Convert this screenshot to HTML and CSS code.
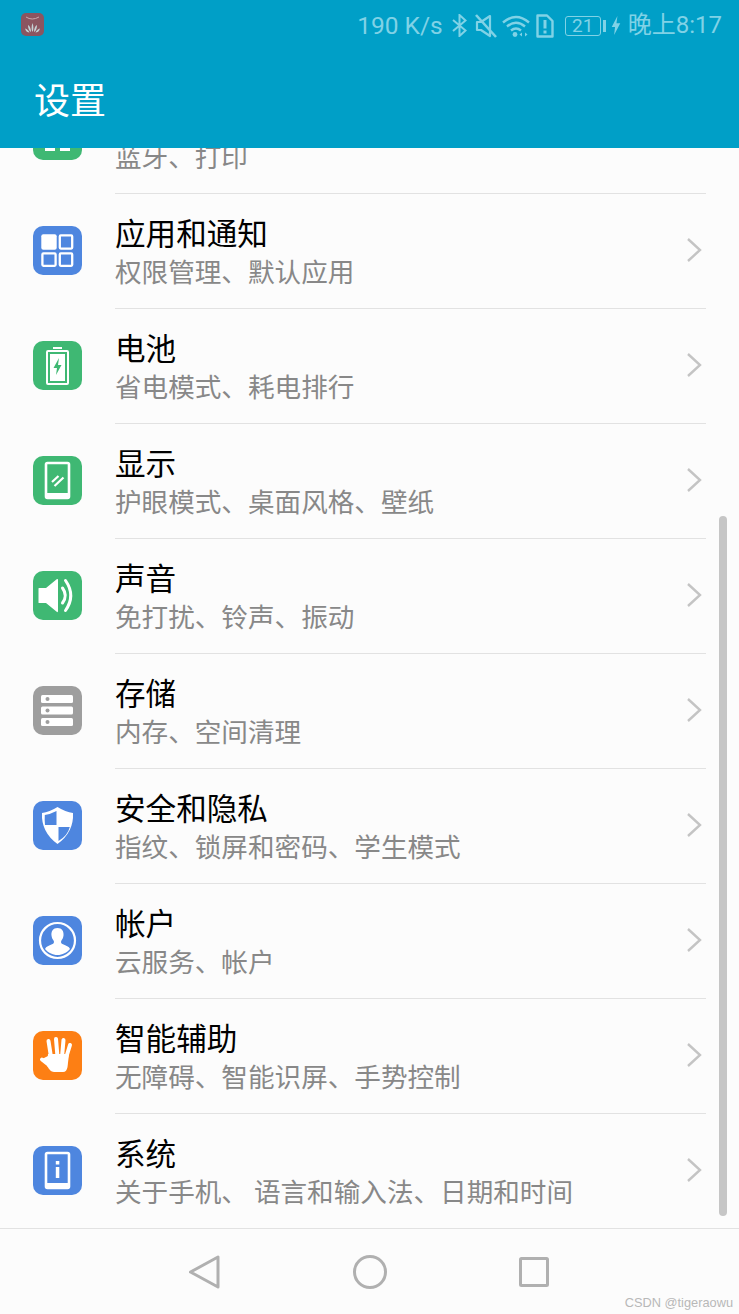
FILE: index.html
```html
<!DOCTYPE html>
<html lang="zh-CN">
<head>
    <meta charset="UTF-8">
    <meta name="viewport" content="width=device-width, initial-scale=1.0">
    <title>设置</title>
    <link rel="stylesheet" href="styles.css">
</head>
<body>
    <header class="appbar">
        <div class="status">
            <svg class="notify" viewBox="0 0 23 23"><rect width="23" height="23" rx="5" fill="#8b5560"/><path d="M5 4q6 4 13 0" fill="none" stroke="#c9a9ae" stroke-width="1"/><path d="M11.500 19c-1.200-2-1.200-6 0-9 1.200 3 1.200 7 0 9zM10 19c-2-1-3-4-3-7 2 1 3 4 3 7zM13 19c0-3 1-6 3-7 0 3-1 6-3 7zM8.500 19.500c-2 0-3.500-1-4.500-4 2 .5 3.500 2 4.500 4zM14.500 19.500c1-2 2.500-3.500 4.500-4-1 3-2.500 4-4.500 4z" fill="#c5d3d6"/></svg>
            <div class="status-right">
                <span class="speed">190 K/s</span>
                <svg class="si si-bt" viewBox="0 0 15 23"><path d="M1 6 13.500 16.500 7.500 22V1L13.500 6.500 1 17" fill="none" stroke="currentColor" stroke-width="2"/></svg>
                <svg class="si si-mute" viewBox="0 0 22 24"><path d="M2 8v8h4l9 6V2L6 8z" fill="none" stroke="currentColor" stroke-width="2.200" stroke-linejoin="round"/><path d="M1 1l20 22" fill="none" stroke="currentColor" stroke-width="2.600"/></svg>
                <svg class="si si-wifi" viewBox="0 0 28 24"><path d="M1 8.500q13-11 26 0M5 12.500q9-7.500 18 0M9 16.500q5-4 10 0" fill="none" stroke="currentColor" stroke-width="2.400"/><circle cx="13" cy="20.500" r="2.400" fill="currentColor"/><path d="M20 18.500v4l-2.500-2zM23 18.500v4l2.500-2z" fill="currentColor"/></svg>
                <svg class="si si-sim" viewBox="0 0 18 24"><path d="M1.500 1.500h9.500l5.500 5.500v15.500H1.500z" fill="none" stroke="currentColor" stroke-width="2.400" stroke-linejoin="round"/><path d="M9 6v8.500M9 16.500v3" stroke="currentColor" stroke-width="3" fill="none"/></svg>
                <span class="battery"><span class="battery-num">21</span></span>
                <span class="battery-tip"></span>
                <svg class="si si-bolt" viewBox="0 0 10 20"><path d="M6.500 0 .5 11.500h3.500L3 20l6.500-12.500H5.500z" fill="currentColor"/></svg>
                <span class="clock">晚上8:17</span>
            </div>
        </div>
        <h1 class="page-title">设置</h1>
    </header>

    <main class="list">
        <div class="row row-first">
            <span class="tile green"><svg viewBox="0 0 49 49"><rect x="12" y="10" width="10" height="30" fill="#fff"/><rect x="27" y="10" width="10" height="30" fill="#fff"/></svg></span>
            <div class="row-body">
                <div class="row-text"><div class="row-title"></div><div class="row-sub">蓝牙、打印</div></div>
            </div>
        </div>

        <div class="row">
            <span class="tile blue"><svg viewBox="0 0 49 49"><rect x="8.300" y="8.300" width="15.400" height="15.400" rx="2" fill="#fff"/><rect x="26.800" y="9.400" width="12.400" height="13.200" rx="1" fill="none" stroke="#fff" stroke-width="2.300"/><rect x="9.400" y="27.400" width="13.200" height="12.400" rx="1" fill="none" stroke="#fff" stroke-width="2.300"/><rect x="26.800" y="27.400" width="12.400" height="12.400" rx="1" fill="none" stroke="#fff" stroke-width="2.300"/></svg></span>
            <div class="row-body">
                <div class="row-text"><div class="row-title">应用和通知</div><div class="row-sub">权限管理、默认应用</div></div>
                <svg class="chev" viewBox="0 0 16 26"><path d="M2 2l12 11L2 24" fill="none" stroke="#c4c4c4" stroke-width="2.400"/></svg>
            </div>
        </div>

        <div class="row">
            <span class="tile green"><svg viewBox="0 0 49 49"><rect x="20" y="6" width="9" height="2" fill="#fff"/><rect x="14" y="10" width="21" height="33" rx="1" fill="none" stroke="#fff" stroke-width="2"/><rect x="17" y="13" width="15" height="27" fill="#fff"/><path d="M26 17l-5.500 10h3.500l-1 7 5.500-10h-3.500z" fill="#3fb873"/></svg></span>
            <div class="row-body">
                <div class="row-text"><div class="row-title">电池</div><div class="row-sub">省电模式、耗电排行</div></div>
                <svg class="chev" viewBox="0 0 16 26"><path d="M2 2l12 11L2 24" fill="none" stroke="#c4c4c4" stroke-width="2.400"/></svg>
            </div>
        </div>

        <div class="row">
            <span class="tile green"><svg viewBox="0 0 49 49"><rect x="13" y="7" width="23" height="35" rx="1.500" fill="none" stroke="#fff" stroke-width="2.600"/><rect x="13" y="37" width="23" height="5" rx="1" fill="#fff"/><path d="M19 26l6.500-6M21.500 30l9-8.500" fill="none" stroke="#fff" stroke-width="2.200"/></svg></span>
            <div class="row-body">
                <div class="row-text"><div class="row-title">显示</div><div class="row-sub">护眼模式、桌面风格、壁纸</div></div>
                <svg class="chev" viewBox="0 0 16 26"><path d="M2 2l12 11L2 24" fill="none" stroke="#c4c4c4" stroke-width="2.400"/></svg>
            </div>
        </div>

        <div class="row">
            <span class="tile green"><svg viewBox="0 0 49 49"><path d="M6 17h7l11-9q1-.5 1 1v31q0 1.500-1 1l-11-9H6q-.5 0-.5-.5v-14q0-.5.5-.5z" fill="#fff"/><path d="M29.500 17q5.500 7.500 0 15M32.500 9.500q10.500 15 0 30" fill="none" stroke="#fff" stroke-width="3" stroke-linecap="round"/></svg></span>
            <div class="row-body">
                <div class="row-text"><div class="row-title">声音</div><div class="row-sub">免打扰、铃声、振动</div></div>
                <svg class="chev" viewBox="0 0 16 26"><path d="M2 2l12 11L2 24" fill="none" stroke="#c4c4c4" stroke-width="2.400"/></svg>
            </div>
        </div>

        <div class="row">
            <span class="tile gray"><svg viewBox="0 0 49 49"><rect x="8" y="9" width="32" height="8" rx="1.500" fill="#fff"/><rect x="8" y="20.500" width="32" height="8" rx="1.500" fill="#fff"/><rect x="8" y="32" width="32" height="8" rx="1.500" fill="#fff"/><circle cx="14.500" cy="13" r="2" fill="#9e9e9e"/><circle cx="14.500" cy="24.500" r="2" fill="#9e9e9e"/><circle cx="14.500" cy="36" r="2" fill="#9e9e9e"/></svg></span>
            <div class="row-body">
                <div class="row-text"><div class="row-title">存储</div><div class="row-sub">内存、空间清理</div></div>
                <svg class="chev" viewBox="0 0 16 26"><path d="M2 2l12 11L2 24" fill="none" stroke="#c4c4c4" stroke-width="2.400"/></svg>
            </div>
        </div>

        <div class="row">
            <span class="tile blue"><svg viewBox="0 0 49 49"><path d="M24.500 6q8 5 15.500 6 1 19-15.500 31Q8 31 9 12q7.500-1 15.500-6z" fill="#fff"/><path d="M23.500 10v14H12q-.5-5-.2-10 6-1 11.700-4zM25.500 26h11.300q-2 8.500-11.300 14z" fill="#4e86df"/></svg></span>
            <div class="row-body">
                <div class="row-text"><div class="row-title">安全和隐私</div><div class="row-sub">指纹、锁屏和密码、学生模式</div></div>
                <svg class="chev" viewBox="0 0 16 26"><path d="M2 2l12 11L2 24" fill="none" stroke="#c4c4c4" stroke-width="2.400"/></svg>
            </div>
        </div>

        <div class="row">
            <span class="tile blue"><svg viewBox="0 0 49 49"><circle cx="24.500" cy="24.500" r="17.500" fill="none" stroke="#fff" stroke-width="2.200"/><path d="M24.500 12c4.500 0 6.500 3.500 6 7.500-.3 2.500-1.300 4-2.300 5.500-.5 1.500 0 2.500 1.800 3.300 3 1.300 6 2.200 7 4.700-3 3.500-7.500 6-12.500 6s-9.500-2.500-12.500-6c1-2.500 4-3.400 7-4.700 1.800-.8 2.300-1.800 1.800-3.300-1-1.500-2-3-2.300-5.500-.5-4 1.500-7.500 6-7.500z" fill="#fff"/></svg></span>
            <div class="row-body">
                <div class="row-text"><div class="row-title">帐户</div><div class="row-sub">云服务、帐户</div></div>
                <svg class="chev" viewBox="0 0 16 26"><path d="M2 2l12 11L2 24" fill="none" stroke="#c4c4c4" stroke-width="2.400"/></svg>
            </div>
        </div>

        <div class="row">
            <span class="tile orange"><svg viewBox="0 0 49 49"><path d="M15 25 17 34 9 28" fill="#fff"/><path d="M9 28.500l7 5.500M18 26 15.500 10M24.500 26 23 8M29 26l1.500-17M33 27l4-13" fill="none" stroke="#fff" stroke-width="4" stroke-linecap="round"/><path d="M15 23h21l-1.500 13c-.5 3-2 5-4.500 5H21c-3 0-5-3-7-6z" fill="#fff"/></svg></span>
            <div class="row-body">
                <div class="row-text"><div class="row-title">智能辅助</div><div class="row-sub">无障碍、智能识屏、手势控制</div></div>
                <svg class="chev" viewBox="0 0 16 26"><path d="M2 2l12 11L2 24" fill="none" stroke="#c4c4c4" stroke-width="2.400"/></svg>
            </div>
        </div>

        <div class="row">
            <span class="tile blue"><svg viewBox="0 0 49 49"><rect x="13" y="7" width="23" height="35" rx="1.500" fill="none" stroke="#fff" stroke-width="2.600"/><rect x="13" y="37" width="23" height="5" rx="1" fill="#fff"/><rect x="22.800" y="15" width="3.500" height="3.500" fill="#fff"/><rect x="22.800" y="21" width="3.500" height="11" fill="#fff"/></svg></span>
            <div class="row-body">
                <div class="row-text"><div class="row-title">系统</div><div class="row-sub">关于手机、 语言和输入法、日期和时间</div></div>
                <svg class="chev" viewBox="0 0 16 26"><path d="M2 2l12 11L2 24" fill="none" stroke="#c4c4c4" stroke-width="2.400"/></svg>
            </div>
        </div>

        <div class="scrollbar"></div>
    </main>

    <nav class="navbar">
        <span class="nav-item"><svg class="nav-icon" viewBox="0 0 34 34"><path d="M2.500 17 30 2v30z" fill="none" stroke="#b0b0b0" stroke-width="3" stroke-linejoin="round"/></svg></span>
        <span class="nav-item"><svg class="nav-icon" viewBox="0 0 34 34"><circle cx="17" cy="17" r="15.500" fill="none" stroke="#b0b0b0" stroke-width="3"/></svg></span>
        <span class="nav-item"><svg class="nav-icon nav-square" viewBox="0 0 30 30"><rect x="1.500" y="1.500" width="27" height="27" rx="1" fill="none" stroke="#b0b0b0" stroke-width="3"/></svg></span>
    </nav>

    <div class="watermark">CSDN @tigeraowu</div>
</body>
</html>
```

FILE: styles.css
```css
* {
    box-sizing: border-box;
}
html, body {
    height: 100%;
}
body {
    margin: 0;
    height: 1314px;
    overflow: hidden;
    position: relative;
    display: flex;
    flex-direction: column;
    background: #fcfcfc;
    font-family: "Noto Sans CJK SC", "Roboto", sans-serif;
    color: #000;
}
.appbar {
    height: 148px;
    flex: none;
    background: #009fc7;
    position: relative;
    z-index: 1;
}
.status {
    height: 50px;
    padding: 13px 17px 0 21px;
    display: flex;
    justify-content: space-between;
    align-items: flex-start;
    color: #80d2e6;
}
.notify {
    width: 23px;
    height: 23px;
}
.status-right {
    display: flex;
    align-items: center;
    height: 25px;
    font-family: "Roboto", "Noto Sans CJK SC", sans-serif;
    font-size: 24.500px;
}
.speed {
    margin-right: 9px;
}
.si {
    flex: none;
    display: block;
}
.si-bt {
    width: 15px;
    height: 23px;
    margin-right: 8px;
}
.si-mute {
    width: 22px;
    height: 24px;
    margin-right: 5px;
}
.si-wifi {
    width: 28px;
    height: 24px;
    margin-right: 6px;
}
.si-sim {
    width: 18px;
    height: 24px;
    margin-right: 11px;
}
.battery {
    width: 36px;
    height: 20px;
    border: 1px solid #80d2e6;
    border-radius: 3px;
    display: flex;
    align-items: center;
    justify-content: center;
}
.battery-num {
    font-size: 19px;
    line-height: 18px;
}
.battery-tip {
    width: 3px;
    height: 12px;
    margin: 0 5px 0 2px;
    background: #80d2e6;
}
.si-bolt {
    width: 10px;
    height: 19px;
    margin-right: 7px;
}
.clock {
    font-size: 24px;
    line-height: 25px;
}
.page-title {
    margin: 0;
    padding: 4px 0 0 34px;
    font-size: 36px;
    line-height: 88px;
    height: 88px;
    font-weight: 400;
    color: #fff;
}
.list {
    flex: 1;
    position: relative;
    overflow: hidden;
    border-bottom: 1px solid #e2e2e2;
}
.row {
    height: 115px;
    display: flex;
    padding-left: 33px;
}
.row-first {
    margin-top: -69px;
}
.tile {
    flex: none;
    width: 49px;
    height: 49px;
    margin: 32px 33px 0 0;
    border-radius: 10px;
    display: block;
}
.tile svg {
    display: block;
    width: 49px;
    height: 49px;
}
.green {
    background: #3fb873;
}
.blue {
    background: #4e86df;
}
.gray {
    background: #9e9e9e;
}
.orange {
    background: #fd7f14;
}
.row-body {
    flex: 1;
    margin-right: 33px;
    display: flex;
    justify-content: space-between;
    align-items: center;
    border-bottom: 1px solid #e2e2e2;
}
.row-title {
    font-size: 30.600px;
    line-height: 40px;
    min-height: 40px;
}
.row-sub {
    font-size: 26.600px;
    line-height: 38px;
    color: #888;
}
.chev {
    width: 16px;
    height: 26px;
    margin: 0 4px 2px 0;
}
.scrollbar {
    position: absolute;
    left: 719px;
    top: 368px;
    width: 8px;
    height: 700px;
    border-radius: 4px;
    background: #c6c6c6;
}
.navbar {
    height: 85px;
    flex: none;
    display: flex;
    justify-content: center;
    align-items: center;
}
.nav-item {
    width: 164.500px;
    display: flex;
    justify-content: center;
}
.nav-icon {
    height: 34px;
    width: 34px;
    display: block;
}
.nav-square {
    height: 30px;
    width: 30px;
}
.watermark {
    position: absolute;
    right: 6px;
    bottom: 4px;
    font-family: "Liberation Sans", sans-serif;
    font-size: 12.800px;
    color: #b8b8b8;
}
```
